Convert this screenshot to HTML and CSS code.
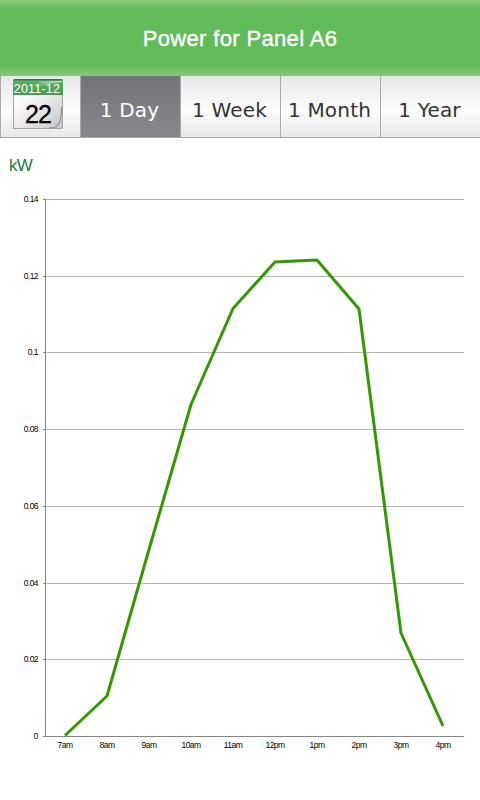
FILE: index.html
```html
<!DOCTYPE html>
<html lang="en">
<head>
  <meta charset="UTF-8">
  <meta name="viewport" content="width=device-width, initial-scale=1.0">
  <title>Power for Panel A6</title>
  <link rel="stylesheet" href="styles.css">
</head>
<body>

  <header class="header">
    <h1>Power for Panel A6</h1>
  </header>

  <nav class="tabs">
    <a class="date">
      <div class="calendar">
        <svg class="calendar-bg" width="50" height="51" viewBox="0 0 50 51">
          <defs>
            <linearGradient id="page" x1="0" y1="0" x2="1" y2="1">
              <stop offset="0.25" stop-color="#fcfcfc"/>
              <stop offset="0.65" stop-color="#e2e2e3"/>
              <stop offset="1" stop-color="#c4c5c6"/>
            </linearGradient>
            <linearGradient id="top" x1="0" y1="0" x2="0" y2="1">
              <stop offset="0" stop-color="#2c7a3c"/>
              <stop offset="0.15" stop-color="#5aae66"/>
              <stop offset="1" stop-color="#459a52"/>
            </linearGradient>
            <linearGradient id="shine" x1="0" y1="0" x2="1" y2="0">
              <stop offset="0.3" stop-color="#fff" stop-opacity="0"/>
              <stop offset="1" stop-color="#fff" stop-opacity="0.7"/>
            </linearGradient>
          </defs>
          <path d="M.5 2V49.500H49.500V2Z" fill="url(#page)" stroke="#a3a4a6"/>
          <path d="M36 49Q44 49 45.500 45Q48.500 41 48.500 28" fill="none" stroke="#85878a"/>
          <path d="M0 2Q0 0 2 0H48Q50 0 50 2V16H0Z" fill="url(#top)"/>
          <path d="M10 2H49V3Q36 4 24 9Q18 4 10 2Z" fill="url(#shine)"/>
          <path d="M1 .5H49" stroke="#327b40"/>
        </svg>
        <span class="month">2011-12</span>
        <span class="day">22</span>
      </div>
    </a>
    <a class="tab active">1 Day</a>
    <a class="tab">1 Week</a>
    <a class="tab">1 Month</a>
    <a class="tab">1 Year</a>
  </nav>

  <main>
    <div class="unit">kW</div>

    <svg class="chart" width="480" height="580" viewBox="0 180 480 580">
      <path class="grid" d="M46 199.500H464M46 276.500H464M46 352.500H464M46 429.500H464M46 506.500H464M46 583.500H464M46 659.500H464"/>
      <path class="axis" d="M45.500 199V737M43 736.500H464M43 199.500H46M43 276.500H46M43 352.500H46M43 429.500H46M43 506.500H46M43 583.500H46M43 659.500H46"/>

      <g class="y-labels">
        <text x="38" y="202">0.14</text>
        <text x="38" y="279">0.12</text>
        <text x="38" y="355">0.1</text>
        <text x="38" y="432">0.08</text>
        <text x="38" y="509">0.06</text>
        <text x="38" y="586">0.04</text>
        <text x="38" y="662">0.02</text>
        <text x="38" y="739">0</text>
      </g>

      <g class="x-labels">
        <text x="65" y="748">7am</text>
        <text x="107" y="748">8am</text>
        <text x="149" y="748">9am</text>
        <text x="191" y="748">10am</text>
        <text x="233" y="748">11am</text>
        <text x="275" y="748">12pm</text>
        <text x="317" y="748">1pm</text>
        <text x="359" y="748">2pm</text>
        <text x="401" y="748">3pm</text>
        <text x="443" y="748">4pm</text>
      </g>

      <polyline class="line" points="65,735.5 107,696 149,549.5 191,404.5 233,308.5 275,262 317,260 359,309 401,633 443,726"/>
    </svg>
  </main>

</body>
</html>
```
FILE: styles.css
```css
body {
  margin: 0;
  background: #fff;
  font-family: "Liberation Sans", Arial, sans-serif;
}
.header {
  height: 75px;
  background: linear-gradient(#8dca7e 0, #62bb5a 9px, #60bb58 66px, #86c777 75px);
}
.header h1 {
  margin: 0;
  padding-top: 1px;
  line-height: 75px;
  text-align: center;
  font-size: 22px;
  font-weight: normal;
  letter-spacing: 0.35px;
  color: #fff;
  -webkit-text-stroke: 0.4px #fff;
}
.tabs {
  display: flex;
  height: 61px;
  border-top: 1px solid #a7a9ac;
  border-bottom: 1px solid #a7a9ac;
  overflow: hidden;
}
.date, .tab {
  box-sizing: border-box;
  border-left: 1px solid #a7a9ac;
  background: linear-gradient(#e6e7e8, #fdfdfd 58%, #e6e7e8);
}
.date {
  width: 80px;
  padding: 3px 0 0 12px;
}
.tab {
  width: 100px;
  padding-right: 2px;
  text-align: center;
  font: 20px/68px "DejaVu Sans", Verdana, sans-serif;
  letter-spacing: 0.2px;
  color: #333;
  white-space: nowrap;
}
.tab.active {
  background: linear-gradient(#727376, #88898c);
  color: #fff;
}
.calendar {
  position: relative;
  width: 50px;
  height: 51px;
  text-align: center;
}
.calendar-bg {
  position: absolute;
  top: 0;
  left: 0;
}
.month, .day {
  display: block;
  position: relative;
}
.month {
  padding: 2px 2px 0 0;
  line-height: 16px;
  font-size: 12.5px;
  letter-spacing: 0.2px;
  color: #fff;
}
.day {
  line-height: 35px;
  font-size: 25px;
  letter-spacing: -1px;
  color: #000;
  -webkit-text-stroke: 0.3px #000;
}
.unit {
  padding: 17px 0 0 9px;
  height: 25px;
  line-height: 22px;
  font-size: 17px;
  letter-spacing: -0.7px;
  color: #1a7a44;
}
.chart {
  display: block;
}
.grid {
  stroke: #b5b5b0;
}
.axis {
  stroke: #868686;
}
.line {
  fill: none;
  stroke: #339900;
  stroke-width: 3;
  stroke-linejoin: round;
}
.y-labels, .x-labels {
  font-size: 8.5px;
  letter-spacing: -0.55px;
  fill: #000;
}
.y-labels {
  text-anchor: end;
}
.x-labels {
  text-anchor: middle;
}
```
